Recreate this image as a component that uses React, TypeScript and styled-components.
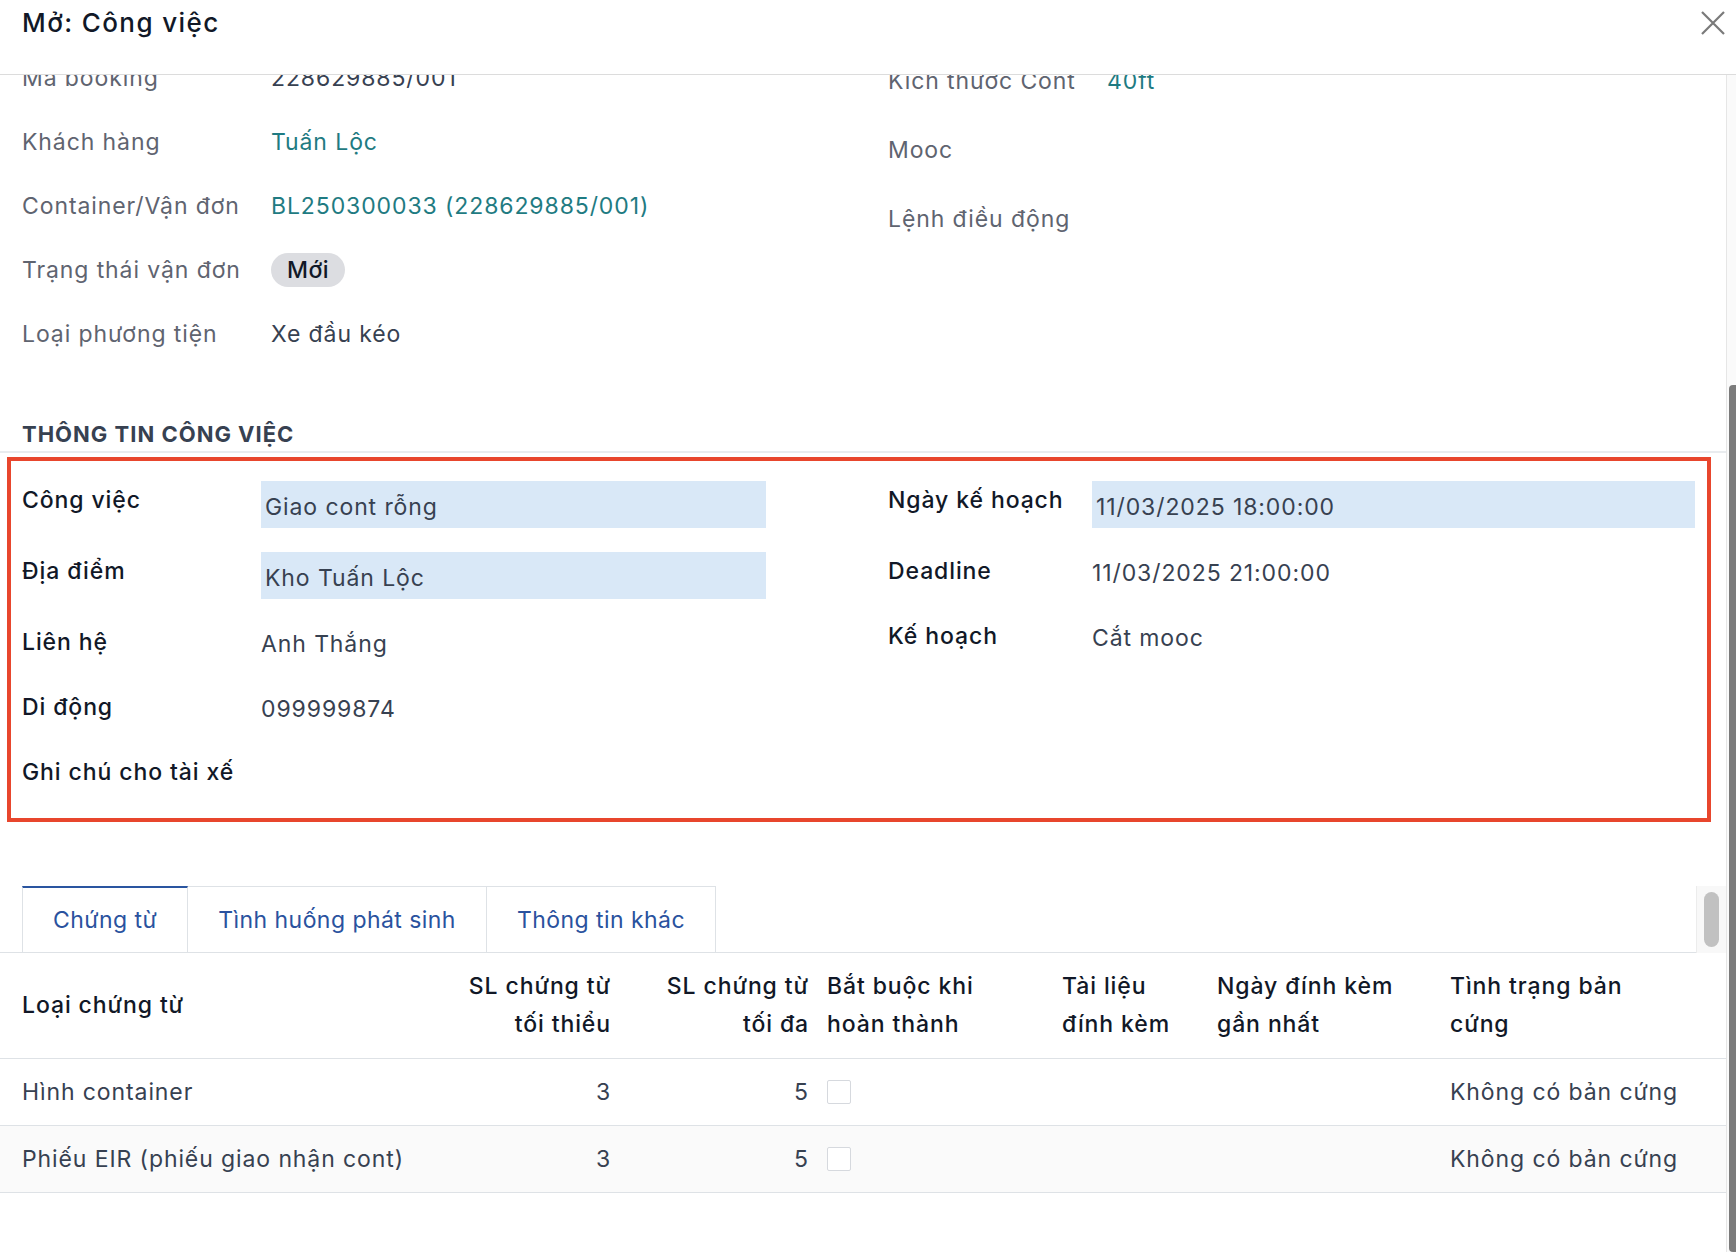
import React, { useLayoutEffect, useRef, useState } from "react";
import styled, { createGlobalStyle } from "styled-components";

const GlobalStyle = createGlobalStyle`
  * { box-sizing: border-box; }
  html, body, #root { height: 100%; }
  body {
    margin: 0;
    font-family: Inter, "Noto Sans", "DejaVu Sans", sans-serif;
    font-size: 23px;
    line-height: 32px;
    letter-spacing: 0.9px;
    color: #374151;
    background: #ffffff;
  }
`;

const Dialog = styled.div`
  height: 100vh;
  display: flex;
  flex-direction: column;
  background: #fff;
`;

const Header = styled.header`
  flex: none;
  height: 75px;
  display: flex;
  align-items: flex-start;
  justify-content: space-between;
  padding: 5px 11px 0 22px;
  border-bottom: 1px solid #dcdcdc;
`;

const Title = styled.h4`
  margin: 0;
  font-size: 26px;
  line-height: 36px;
  font-weight: 500;
  letter-spacing: 1.4px;
  color: #111827;
`;

const CloseButton = styled.button`
  margin-top: 6px;
  width: 24px;
  height: 24px;
  padding: 0;
  border: 0;
  background: none;
  color: #7a7a7a;
  display: flex;
  cursor: pointer;
`;

const BodyFrame = styled.div`
  flex: 1;
  min-height: 0;
  display: flex;
`;

const Scroller = styled.div`
  flex: 1;
  min-width: 0;
  overflow-y: auto;
  padding-bottom: 59px;
  scrollbar-width: none;
`;

const ScrollTrack = styled.div`
  flex: none;
  width: 10px;
  display: flex;
  flex-direction: column;
  align-items: flex-end;
  background: #fafafa;
  border-left: 1px solid #e6e6e6;
`;

const ScrollThumb = styled.div`
  width: 7px;
  border-radius: 4px 0 0 4px;
  background: #7b7b7b;
`;

// part of the sheet scrolled out of view above the visible fields
const SheetHead = styled.div`
  height: 392px;
  padding: 24px 22px 0;
  overflow: hidden;
`;

const StatusBar = styled.div`
  display: flex;
  gap: 12px;
  color: #6b7280;
`;

const RecordName = styled.h1`
  margin: 40px 0 0;
  font-size: 40px;
  line-height: 52px;
  font-weight: 600;
  color: #111827;
`;

const InfoGroup = styled.div`
  display: grid;
  grid-template-columns: 866px 1fr;
  padding-left: 22px;
`;

const Column = styled.div`
  display: flex;
  flex-direction: column;
`;

const InfoRow = styled.div<{ $labelWidth: number; $height: number }>`
  display: grid;
  grid-template-columns: ${(p) => p.$labelWidth}px 1fr;
  align-items: center;
  min-height: ${(p) => p.$height}px;
`;

const InfoLabel = styled.div`
  color: #5f6470;
`;

const InfoValue = styled.div<{ $link?: boolean }>`
  color: ${(p) => (p.$link ? "#1f7b82" : "#374151")};
`;

const Badge = styled.span`
  display: inline-flex;
  align-items: center;
  height: 34px;
  padding: 0 16px;
  border-radius: 17px;
  background: #dcdde1;
  color: #111827;
  font-weight: 500;
  letter-spacing: 0.4px;
`;

const SectionTitle = styled.h3`
  margin: 52px 0 0;
  padding: 0 0 1px 22px;
  font-size: 22px;
  line-height: 32px;
  font-weight: 700;
  letter-spacing: 1px;
  color: #374151;
  text-transform: uppercase;
  border-bottom: 2px solid #e9ecef;
`;

const Highlight = styled.section`
  margin: 4px 15px 0 7px;
  border: 4px solid #e8462d;
  padding: 20px 12px 0 11px;
  display: grid;
  grid-template-columns: 744px 1fr;
  column-gap: 122px;
`;

const FieldRow = styled.div<{ $labelWidth: number; $input?: boolean }>`
  display: grid;
  grid-template-columns: ${(p) => p.$labelWidth}px 1fr;
  align-items: start;
  min-height: ${(p) => (p.$input ? 71 : 65)}px;
`;

const FieldLabel = styled.div`
  padding-top: 3px;
  font-weight: 500;
  color: #111827;
`;

const FieldInput = styled.div`
  height: 47px;
  padding: 10px 4px 5px;
  background: #d9e8f7;
  color: #374151;
`;

const FieldText = styled.div`
  padding-top: 5px;
  color: #374151;
`;

const TabBar = styled.div`
  margin-top: 64px;
  height: 67px;
  display: flex;
`;

const TabList = styled.div`
  flex: 1;
  display: flex;
  padding-left: 22px;
  border-bottom: 1px solid #dee2e6;
`;

const Tab = styled.div<{ $active?: boolean }>`
  display: flex;
  align-items: center;
  padding: 0 30px;
  letter-spacing: 0.45px;
  border-right: 1px solid #dee2e6;
  border-top: ${(p) => (p.$active ? "2px solid #2a55a0" : "1px solid #dee2e6")};
  color: #2a529e;
  cursor: pointer;

  &:first-child {
    border-left: 1px solid #dee2e6;
  }
`;

const TabScroll = styled.div`
  width: 30px;
  display: flex;
  justify-content: center;
  padding-top: 6px;
  background: #f8f8f8;
  border-left: 1px solid #ececec;
`;

const TabThumb = styled.div`
  width: 15px;
  height: 55px;
  border-radius: 8px;
  background: #c1c1c1;
`;

const Table = styled.table`
  width: 100%;
  border-collapse: collapse;
  table-layout: fixed;
`;

const HeadCell = styled.th<{ $align?: "left" | "right" }>`
  height: 105px;
  padding: 0 9px;
  text-align: ${(p) => p.$align ?? "left"};
  vertical-align: middle;
  font-weight: 500;
  line-height: 38px;
  color: #111827;
  white-space: nowrap;
  border-bottom: 1px solid #dee2e6;

  &:first-child {
    padding-left: 22px;
  }
`;

const BodyRow = styled.tr<{ $striped?: boolean }>`
  height: 67px;
  background: ${(p) => (p.$striped ? "#fafafa" : "#ffffff")};
  border-bottom: 1px solid #dee2e6;
`;

const Cell = styled.td<{ $align?: "left" | "right" }>`
  padding: 0 9px;
  text-align: ${(p) => p.$align ?? "left"};
  vertical-align: middle;
  color: #374151;
  white-space: nowrap;

  &:first-child {
    padding-left: 22px;
  }
`;

const CheckBox = styled.span`
  display: block;
  width: 24px;
  height: 24px;
  border: 1px solid #d6d9de;
  border-radius: 2px;
  background: #fff;
`;

type Info = { label: string; value?: string; link?: boolean; badge?: string };

const leftInfo: Info[] = [
  { label: "Mã booking", value: "228629885/001" },
  { label: "Khách hàng", value: "Tuấn Lộc", link: true },
  { label: "Container/Vận đơn", value: "BL250300033 (228629885/001)", link: true },
  { label: "Trạng thái vận đơn", badge: "Mới" },
  { label: "Loại phương tiện", value: "Xe đầu kéo" },
];

const rightInfo: Info[] = [
  { label: "Kích thước Cont", value: "40ft", link: true },
  { label: "Mooc" },
  { label: "Lệnh điều động" },
];

type Field = { label: string; value?: string; input?: boolean };

const jobLeft: Field[] = [
  { label: "Công việc", value: "Giao cont rỗng", input: true },
  { label: "Địa điểm", value: "Kho Tuấn Lộc", input: true },
  { label: "Liên hệ", value: "Anh Thắng" },
  { label: "Di động", value: "099999874" },
  { label: "Ghi chú cho tài xế" },
];

const jobRight: Field[] = [
  { label: "Ngày kế hoạch", value: "11/03/2025 18:00:00", input: true },
  { label: "Deadline", value: "11/03/2025 21:00:00" },
  { label: "Kế hoạch", value: "Cắt mooc" },
];

const columns: { lines: string[]; width: number; align?: "left" | "right" }[] = [
  { lines: ["Loại chứng từ"], width: 420 },
  { lines: ["SL chứng từ", "tối thiểu"], width: 200, align: "right" },
  { lines: ["SL chứng từ", "tối đa"], width: 198, align: "right" },
  { lines: ["Bắt buộc khi", "hoàn thành"], width: 235 },
  { lines: ["Tài liệu", "đính kèm"], width: 155 },
  { lines: ["Ngày đính kèm", "gần nhất"], width: 233 },
  { lines: ["Tình trạng bản", "cứng"], width: 285 },
];

const documents = [
  { name: "Hình container", min: 3, max: 5, status: "Không có bản cứng" },
  { name: "Phiếu EIR (phiếu giao nhận cont)", min: 3, max: 5, status: "Không có bản cứng" },
];

const InfoColumn = ({ items, labelWidth, rowHeight }: { items: Info[]; labelWidth: number; rowHeight: number }) => (
  <Column>
    {items.map((item) => (
      <InfoRow key={item.label} $labelWidth={labelWidth} $height={rowHeight}>
        <InfoLabel>{item.label}</InfoLabel>
        {item.badge ? (
          <div>
            <Badge>{item.badge}</Badge>
          </div>
        ) : (
          <InfoValue $link={item.link}>{item.value}</InfoValue>
        )}
      </InfoRow>
    ))}
  </Column>
);

const FieldColumn = ({ items, labelWidth }: { items: Field[]; labelWidth: number }) => (
  <Column>
    {items.map((f) => (
      <FieldRow key={f.label} $labelWidth={labelWidth} $input={f.input}>
        <FieldLabel>{f.label}</FieldLabel>
        {f.input ? <FieldInput>{f.value}</FieldInput> : <FieldText>{f.value}</FieldText>}
      </FieldRow>
    ))}
  </Column>
);

export default function App() {
  const scrollRef = useRef<HTMLDivElement>(null);
  const [thumb, setThumb] = useState({ top: 0, height: 0 });

  useLayoutEffect(() => {
    const el = scrollRef.current;
    if (!el) return;
    el.scrollTop = el.scrollHeight;
    const ratio = el.clientHeight / el.scrollHeight;
    setThumb({
      top: el.scrollTop * ratio,
      height: el.clientHeight * ratio,
    });
  }, []);

  return (
    <Dialog>
      <GlobalStyle />
      <Header>
        <Title>Mở: Công việc</Title>
        <CloseButton aria-label="Đóng">
          <svg width="24" height="24" viewBox="0 0 24 24" fill="none" stroke="currentColor" strokeWidth="2.2">
            <path d="M1 1 L23 23 M23 1 L1 23" />
          </svg>
        </CloseButton>
      </Header>

      <BodyFrame>
        <Scroller ref={scrollRef}>
          <SheetHead>
            <StatusBar>
              <span>Mới</span>
              <span>Đang thực hiện</span>
              <span>Hoàn thành</span>
            </StatusBar>
            <RecordName>CV/2025/03/0041</RecordName>
          </SheetHead>

          <InfoGroup>
            <InfoColumn items={leftInfo} labelWidth={249} rowHeight={64} />
            <InfoColumn items={rightInfo} labelWidth={219} rowHeight={69} />
          </InfoGroup>

          <SectionTitle>Thông tin công việc</SectionTitle>

          <Highlight>
            <FieldColumn items={jobLeft} labelWidth={239} />
            <FieldColumn items={jobRight} labelWidth={204} />
          </Highlight>

          <TabBar>
            <TabList>
              <Tab $active>Chứng từ</Tab>
              <Tab>Tình huống phát sinh</Tab>
              <Tab>Thông tin khác</Tab>
            </TabList>
            <TabScroll>
              <TabThumb />
            </TabScroll>
          </TabBar>

          <Table>
            <colgroup>
              {columns.map((c, i) => (
                <col key={i} style={{ width: c.width }} />
              ))}
            </colgroup>
            <thead>
              <tr>
                {columns.map((c, i) => (
                  <HeadCell key={i} $align={c.align}>
                    {c.lines.map((line, j) => (
                      <React.Fragment key={j}>
                        {j > 0 && <br />}
                        {line}
                      </React.Fragment>
                    ))}
                  </HeadCell>
                ))}
              </tr>
            </thead>
            <tbody>
              {documents.map((d, i) => (
                <BodyRow key={d.name} $striped={i % 2 === 1}>
                  <Cell>{d.name}</Cell>
                  <Cell $align="right">{d.min}</Cell>
                  <Cell $align="right">{d.max}</Cell>
                  <Cell>
                    <CheckBox />
                  </Cell>
                  <Cell />
                  <Cell />
                  <Cell>{d.status}</Cell>
                </BodyRow>
              ))}
            </tbody>
          </Table>
        </Scroller>

        <ScrollTrack>
          <ScrollThumb style={{ marginTop: thumb.top, height: thumb.height }} />
        </ScrollTrack>
      </BodyFrame>
    </Dialog>
  );
}
